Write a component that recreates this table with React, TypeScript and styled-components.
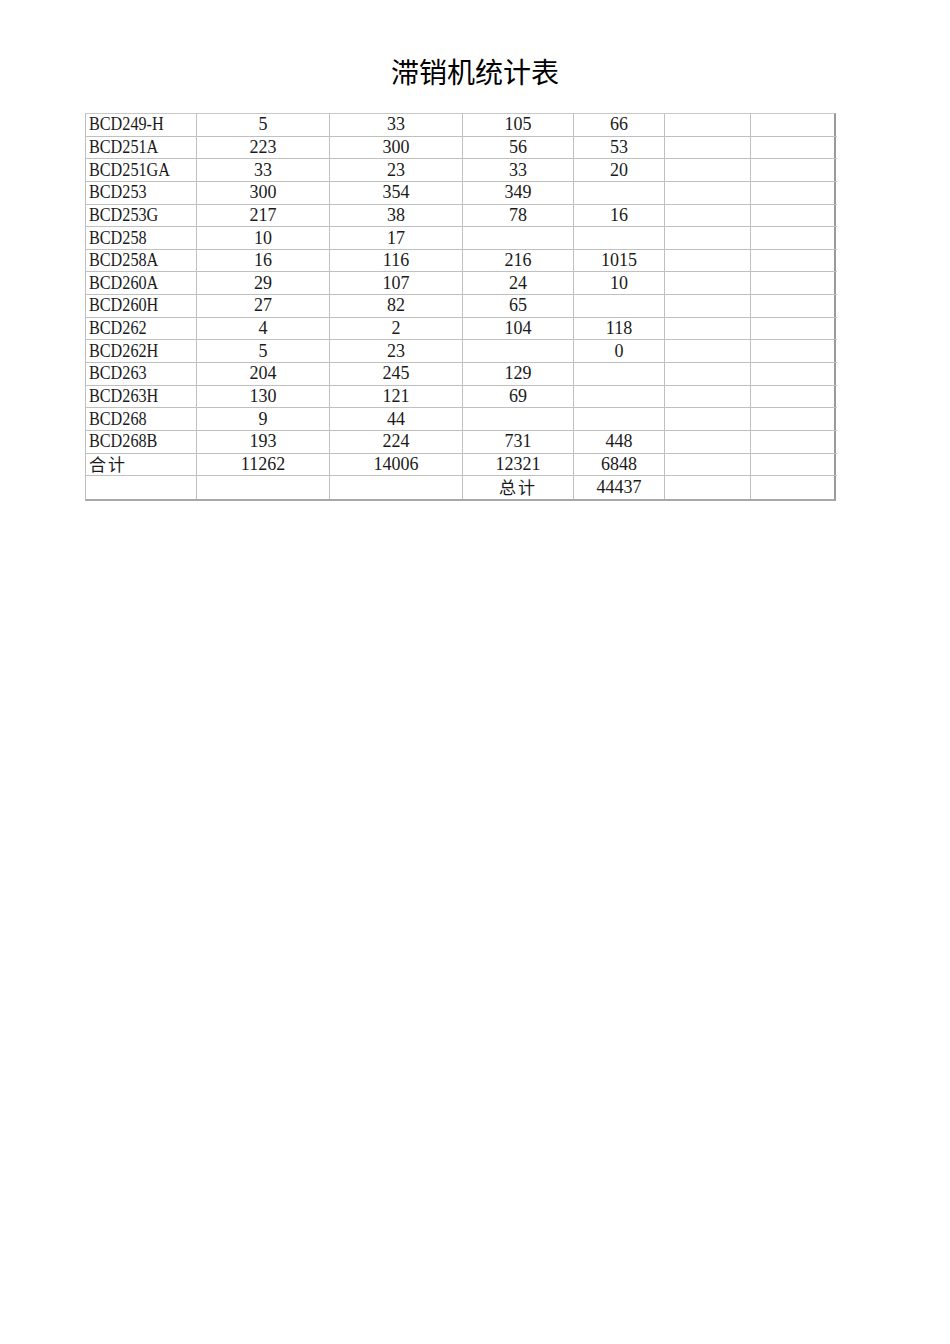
import React from "react";
import styled, { createGlobalStyle } from "styled-components";

const Global = createGlobalStyle`
  html, body { margin: 0; padding: 0; background: #fff; }
  body { font-family: "Liberation Serif", "Noto Sans CJK SC", serif; color: #111; }
`;

const Page = styled.div`
  width: 950px;
  min-height: 1344px;
  background: #fff;
  display: flex;
  flex-direction: column;
  align-items: stretch;
  padding-top: 52px;
  box-sizing: border-box;
`;

const Title = styled.h1`
  margin: 0 0 23px 0;
  height: 38px;
  line-height: 38px;
  text-align: center;
  font-family: "Noto Sans CJK SC", "Noto Sans", sans-serif;
  font-weight: 400;
  font-size: 28px;
  color: #000;
`;

const Grid = styled.div`
  margin-left: 85px;
  width: 751px;
  display: grid;
  grid-template-columns: 111px 133px 133px 111px 91px 86px 86px;
  grid-auto-rows: 22.65px;
  border-top: 1px solid #c8c8c8;
  border-left: 1px solid #bdbdbd;
  border-right: 2px solid #9a9a9a;
  border-bottom: 2px solid #a8a8a8;
  box-sizing: border-box;
`;

const Cell = styled.div<{ $left?: boolean; $cjk?: boolean; $last?: boolean }>`
  border-right: 1px solid #c0c0c0;
  border-bottom: ${(p) => (p.$last ? "none" : "1px solid #c0c0c0")};
  box-sizing: border-box;
  display: flex;
  align-items: center;
  justify-content: ${(p) => (p.$left ? "flex-start" : "center")};
  padding-left: ${(p) => (p.$left ? "3px" : "0")};
  padding-bottom: 1px;
  font-family: ${(p) =>
    p.$cjk
      ? `"Noto Sans CJK SC", sans-serif`
      : `"Liberation Serif", "Noto Sans CJK SC", serif`};
  font-size: ${(p) => (p.$cjk ? "17px" : "18px")};
  letter-spacing: ${(p) => (p.$cjk ? "2px" : "0")};
  color: #1a1a1a;
  white-space: nowrap;
  line-height: 20px;
  &:nth-child(7n) {
    border-right: none;
  }
`;

const Narrow = styled.span`
  display: inline-block;
  transform: scaleX(0.9);
  transform-origin: left center;
`;

const rows: string[][] = [
  ["BCD249-H", "5", "33", "105", "66"],
  ["BCD251A", "223", "300", "56", "53"],
  ["BCD251GA", "33", "23", "33", "20"],
  ["BCD253", "300", "354", "349", ""],
  ["BCD253G", "217", "38", "78", "16"],
  ["BCD258", "10", "17", "", ""],
  ["BCD258A", "16", "116", "216", "1015"],
  ["BCD260A", "29", "107", "24", "10"],
  ["BCD260H", "27", "82", "65", ""],
  ["BCD262", "4", "2", "104", "118"],
  ["BCD262H", "5", "23", "", "0"],
  ["BCD263", "204", "245", "129", ""],
  ["BCD263H", "130", "121", "69", ""],
  ["BCD268", "9", "44", "", ""],
  ["BCD268B", "193", "224", "731", "448"],
  ["合计", "11262", "14006", "12321", "6848"],
  ["", "", "", "总计", "44437"],
];

const isCjk = (s: string) => /[\u4e00-\u9fff]/.test(s);

export default function App() {
  return (
    <Page>
      <Global />
      <Title>滞销机统计表</Title>
      <Grid>
        {rows.map((r, ri) =>
          [...r, "", ""].map((v, ci) => {
            const cjk = isCjk(v);
            return (
              <Cell
                key={`${ri}-${ci}`}
                $left={ci === 0}
                $cjk={cjk}
                $last={ri === rows.length - 1}
              >
                {ci === 0 && !cjk && v ? <Narrow>{v}</Narrow> : v}
              </Cell>
            );
          })
        )}
      </Grid>
    </Page>
  );
}
